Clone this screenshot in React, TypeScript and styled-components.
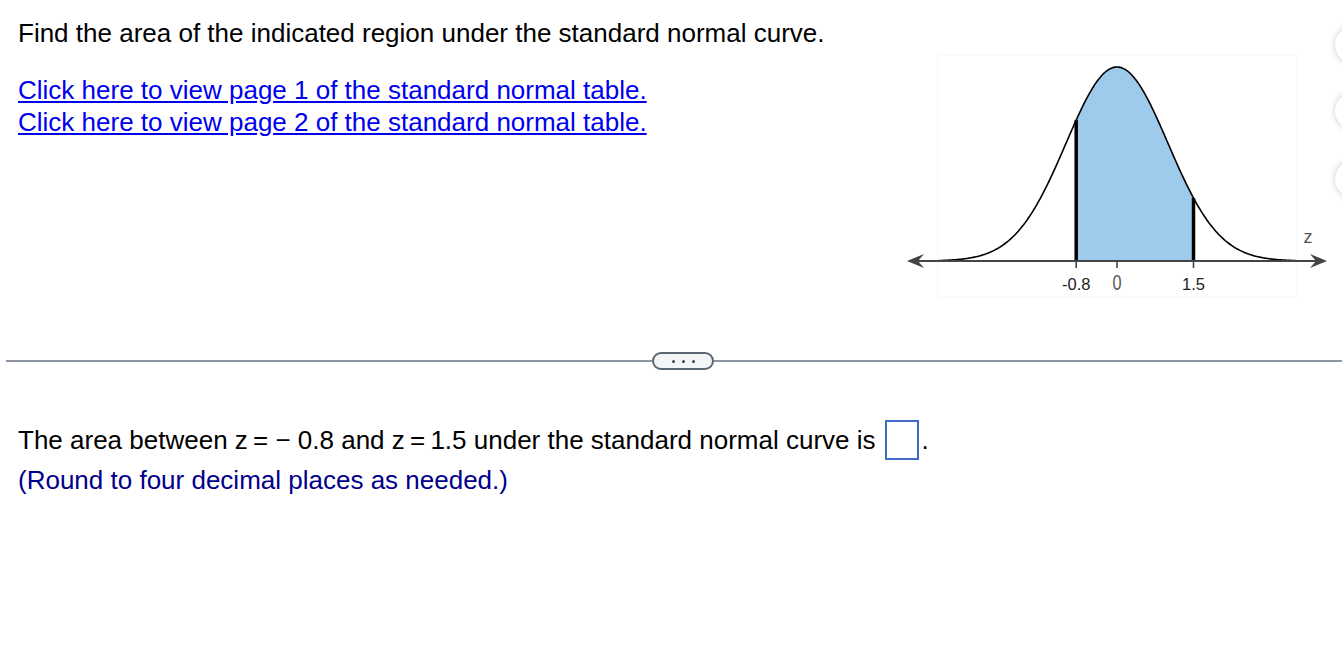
import React from "react";
import styled, { createGlobalStyle } from "styled-components";

const Global = createGlobalStyle`
  html, body { margin: 0; padding: 0; background: #fff; }
  body { font-family: "Liberation Sans", Arial, sans-serif; overflow: hidden; }
`;

const Page = styled.div`
  position: relative;
  width: 1342px;
  height: 658px;
  overflow: hidden;
`;

const Top = styled.div`
  display: flex;
  justify-content: space-between;
  height: 351px;
`;

const LeftCol = styled.div`
  padding: 17px 0 0 18px;
`;

const Text = styled.div<{ $color?: string; $lh?: number }>`
  font-size: 26px;
  color: ${(p) => p.$color ?? "#000"};
  line-height: ${(p) => p.$lh ?? 32}px;
  white-space: nowrap;
`;

const Links = styled.div`
  margin-top: 25px;
  display: flex;
  flex-direction: column;
`;

const Link = styled.a`
  font-size: 26px;
  line-height: 32px;
  color: #0000ee;
  text-decoration: underline;
  cursor: pointer;
  white-space: nowrap;
`;

const Graph = styled.svg`
  margin-top: 50px;
  width: 442px;
  height: 250px;
  flex: none;
`;

const SideButton = styled.div<{ $top: number }>`
  position: absolute;
  left: 1335px;
  top: ${(p) => p.$top}px;
  width: 36px;
  height: 36px;
  border-radius: 50%;
  background: #fff;
  box-shadow: 0 0 6px rgba(0, 0, 0, 0.22);
`;

const DividerRow = styled.div`
  display: flex;
  align-items: center;
  margin-left: 6px;
  height: 20px;
`;

const Line = styled.div<{ $grow?: boolean }>`
  height: 2px;
  background: #8e96a2;
  flex: ${(p) => (p.$grow ? "1" : "none")};
  width: ${(p) => (p.$grow ? "auto" : "646px")};
`;

const Pill = styled.div`
  width: 58px;
  height: 14px;
  border: 2px solid #5b6674;
  border-radius: 9px;
  background: #f4f5f7;
  display: flex;
  align-items: center;
  justify-content: center;
  gap: 7px;
`;

const Dot = styled.span`
  width: 3px;
  height: 3px;
  border-radius: 50%;
  background: #3d4650;
`;

const Answer = styled.div`
  padding: 49px 0 0 18px;
`;

const AnswerLine = styled.div`
  display: flex;
  align-items: center;
  font-size: 26px;
  line-height: 40px;
  white-space: pre;
`;

const InputBox = styled.span`
  display: inline-block;
  width: 30px;
  height: 36px;
  border: 2px solid #4169c8;
  margin-left: 9px;
  margin-right: 3px;
`;

const MEAN = 217;
const AXIS = 211;
const SD = 51;
const PEAK = 194;

const yAt = (z: number) => AXIS - PEAK * Math.exp((-z * z) / 2);
const xAt = (z: number) => MEAN + SD * z;

function curvePath(a: number, b: number, step = 0.02) {
  const pts: string[] = [];
  for (let z = a; z <= b + 1e-9; z += step) {
    pts.push(`${xAt(z).toFixed(2)},${yAt(z).toFixed(2)}`);
  }
  return pts;
}

function NormalGraph() {
  const full = curvePath(-3.5, 3.5);
  const shade = curvePath(-0.8, 1.5);
  const shadePath = `M${xAt(-0.8)},${AXIS} L${shade.join(" L")} L${xAt(1.5)},${AXIS} Z`;
  const left = 7;
  const right = 427;
  return (
    <Graph viewBox="0 0 442 250">
      <rect x="38" y="5" width="359" height="242" fill="none" stroke="#f7f7f7" strokeWidth="1" />
      <path d={shadePath} fill="#9ecbeb" />
      <path d={`M${full.join(" L")}`} fill="none" stroke="#000" strokeWidth="1.6" />
      <line x1={xAt(-0.8)} y1={AXIS} x2={xAt(-0.8)} y2={yAt(-0.8)} stroke="#000" strokeWidth="3.5" />
      <line x1={xAt(1.5)} y1={AXIS} x2={xAt(1.5)} y2={yAt(1.5)} stroke="#000" strokeWidth="3.5" />
      <line x1={left + 4} y1={AXIS} x2={right - 4} y2={AXIS} stroke="#444" strokeWidth="2" />
      <path d={`M${left},${AXIS} L${left + 17},${AXIS - 7} L${left + 11},${AXIS} L${left + 17},${AXIS + 7} Z`} fill="#444" />
      <path d={`M${right},${AXIS} L${right - 17},${AXIS - 7} L${right - 11},${AXIS} L${right - 17},${AXIS + 7} Z`} fill="#444" />
      {[-0.8, 0, 1.5].map((z) => (
        <line key={z} x1={xAt(z)} y1={AXIS} x2={xAt(z)} y2={AXIS + 7} stroke="#444" strokeWidth="1.6" />
      ))}
      <text x={xAt(-0.8)} y="240" textAnchor="middle" fontSize="16.5" fill="#222" fontFamily="Liberation Sans, Arial, sans-serif">-0.8</text>
      <text transform={`translate(${xAt(0)},240) scale(0.74,1)`} textAnchor="middle" fontSize="22" fill="#5a5a5a" fontFamily="Liberation Sans, Arial, sans-serif">0</text>
      <text x={xAt(1.5)} y="240" textAnchor="middle" fontSize="16.5" fill="#222" fontFamily="Liberation Sans, Arial, sans-serif">1.5</text>
      <text x="408" y="193" textAnchor="middle" fontSize="18" fill="#555" fontFamily="Liberation Sans, Arial, sans-serif">z</text>
    </Graph>
  );
}

export default function App() {
  return (
    <Page>
      <Global />
      <Top>
        <LeftCol>
          <Text>Find the area of the indicated region under the standard normal curve.</Text>
          <Links>
            <Link>Click here to view page 1 of the standard normal table.</Link>
            <Link>Click here to view page 2 of the standard normal table.</Link>
          </Links>
        </LeftCol>
        <NormalGraph />
      </Top>
      <SideButton $top={27} />
      <SideButton $top={93} />
      <SideButton $top={161} />
      <DividerRow>
        <Line />
        <Pill>
          <Dot />
          <Dot />
          <Dot />
        </Pill>
        <Line $grow />
      </DividerRow>
      <Answer>
        <AnswerLine>
          {"The area between z\u2009= \u2212 0.8 and z\u2009=\u20091.5 under the standard normal curve is"}
          <InputBox />.
        </AnswerLine>
        <Text $color="#00008b" $lh={40}>(Round to four decimal places as needed.)</Text>
      </Answer>
    </Page>
  );
}
